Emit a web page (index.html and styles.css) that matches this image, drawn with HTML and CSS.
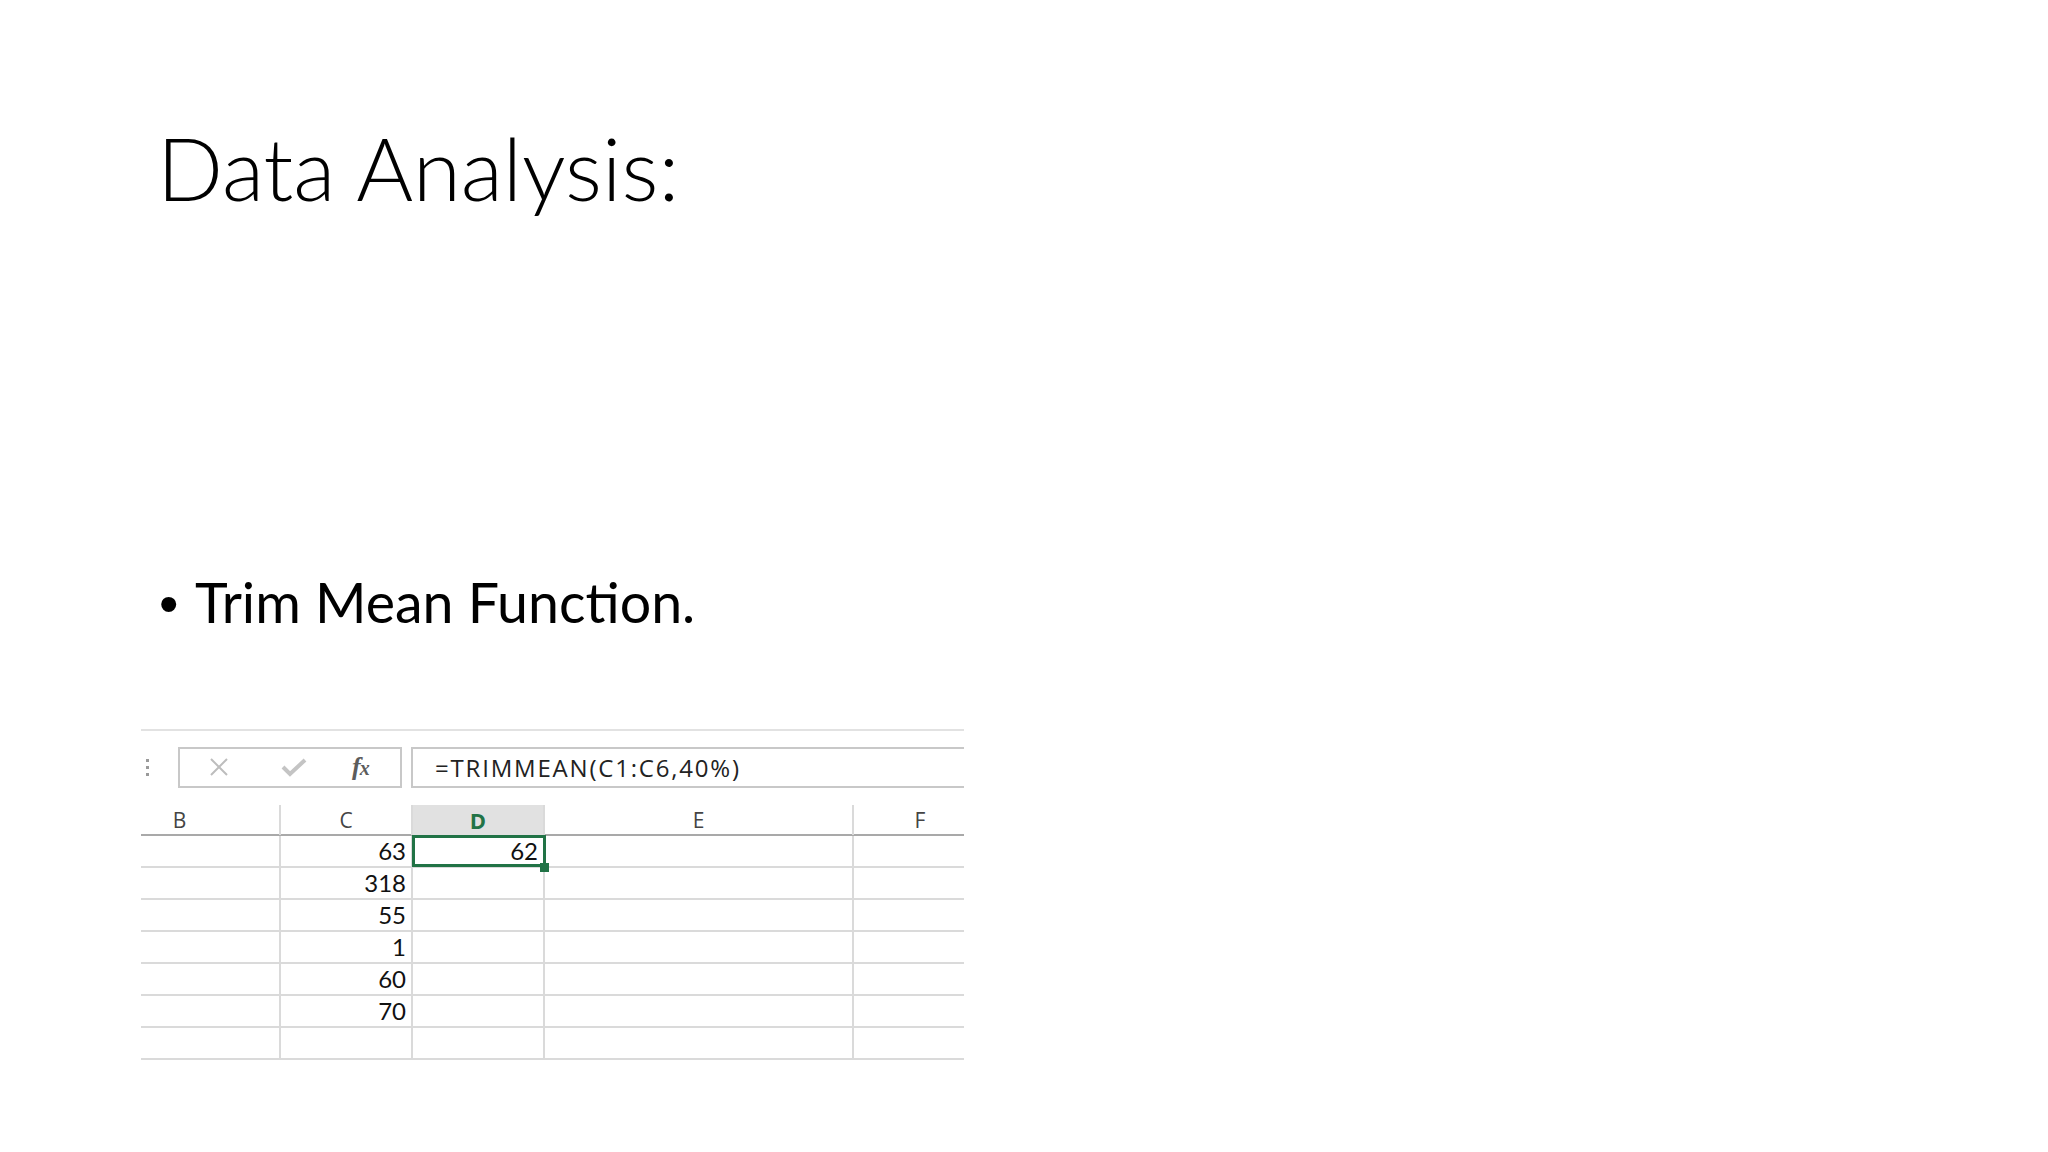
FILE: index.html
```html
<!DOCTYPE html>
<html lang="en">
<head>
    <meta charset="UTF-8">
    <title>Data Analysis</title>
    <link rel="stylesheet" href="styles.css">
</head>
<body>
    <div class="slide">
        <h1 class="title">Data Analysis:</h1>

        <ul class="points">
            <li><span class="bullet">•</span>Trim Mean Function.</li>
        </ul>

        <!-- Excel capture -->
        <div class="sheet">
            <div class="formula-row">
                <div class="grip"><i></i><i></i><i></i></div>
                <div class="fx-box">
                    <svg class="ico-x" width="22" height="22" viewBox="0 0 22 22">
                        <path d="M3 3 L19 19 M19 3 L3 19" stroke="#bdbdbd" stroke-width="2" fill="none"/>
                    </svg>
                    <svg class="ico-ok" width="28" height="22" viewBox="0 0 28 22">
                        <path d="M3 11 L10 18 L25 4" stroke="#c4c4c4" stroke-width="4" fill="none"/>
                    </svg>
                    <span class="fx">f<small>x</small></span>
                </div>
                <div class="formula">=TRIMMEAN(C1:C6,40%)</div>
            </div>

            <div class="grid">
                <div class="grid-inner">
                    <div class="row head">
                        <div class="cell">B</div>
                        <div class="cell">C</div>
                        <div class="cell active">D</div>
                        <div class="cell">E</div>
                        <div class="cell">F</div>
                    </div>
                    <div class="row">
                        <div class="cell"></div>
                        <div class="cell num">63</div>
                        <div class="cell num selected">62<span class="handle"></span></div>
                        <div class="cell"></div>
                        <div class="cell"></div>
                    </div>
                    <div class="row">
                        <div class="cell"></div>
                        <div class="cell num">318</div>
                        <div class="cell"></div>
                        <div class="cell"></div>
                        <div class="cell"></div>
                    </div>
                    <div class="row">
                        <div class="cell"></div>
                        <div class="cell num">55</div>
                        <div class="cell"></div>
                        <div class="cell"></div>
                        <div class="cell"></div>
                    </div>
                    <div class="row">
                        <div class="cell"></div>
                        <div class="cell num">1</div>
                        <div class="cell"></div>
                        <div class="cell"></div>
                        <div class="cell"></div>
                    </div>
                    <div class="row">
                        <div class="cell"></div>
                        <div class="cell num">60</div>
                        <div class="cell"></div>
                        <div class="cell"></div>
                        <div class="cell"></div>
                    </div>
                    <div class="row">
                        <div class="cell"></div>
                        <div class="cell num">70</div>
                        <div class="cell"></div>
                        <div class="cell"></div>
                        <div class="cell"></div>
                    </div>
                    <div class="row">
                        <div class="cell"></div>
                        <div class="cell"></div>
                        <div class="cell"></div>
                        <div class="cell"></div>
                        <div class="cell"></div>
                    </div>
                </div>
            </div>
        </div>
    </div>
</body>
</html>
```

FILE: styles.css
```css
* {
    margin: 0;
    padding: 0;
    box-sizing: border-box;
}

body {
    width: 2048px;
    height: 1152px;
    background: #ffffff;
    color: #000000;
    font-family: Lato, 'Open Sans', sans-serif;
    overflow: hidden;
}

.slide {
    padding-left: 141px;
    padding-top: 124px;
    height: 100%;
}

.title {
    font-family: Lato, sans-serif;
    font-weight: 300;
    font-size: 87px;
    line-height: 1;
    padding-left: 16px;
    color: #000;
}

.points {
    list-style: none;
    margin-top: 363px;
    padding-left: 18px;
}

.points li {
    display: flex;
    align-items: baseline;
    font-size: 55.5px;
    line-height: 1;
}

.bullet {
    font-family: 'Liberation Sans', sans-serif;
    width: 36px;
    flex-shrink: 0;
}

/* Excel screenshot */
.sheet {
    margin-top: 96px;
    width: 823px;
    border-top: 2px solid #e2e2e2;
}

.formula-row {
    display: flex;
    align-items: center;
    margin-top: 16px;
    height: 41px;
}

.grip {
    width: 37px;
    height: 41px;
    display: flex;
    flex-direction: column;
    justify-content: center;
    gap: 4px;
    padding-left: 5px;
}

.grip i {
    display: block;
    width: 3px;
    height: 3px;
    background: #9a9a9a;
}

.fx-box {
    width: 224px;
    height: 41px;
    border: 2px solid #c8c8c8;
    display: flex;
    align-items: center;
    padding-left: 28px;
}

.ico-x {
    margin-right: 50px;
}

.ico-ok {
    margin-right: 44px;
}

.fx {
    font-family: 'Liberation Serif', serif;
    font-style: italic;
    font-weight: 700;
    font-size: 26px;
    color: #5c5c5c;
    letter-spacing: -1px;
}

.fx small {
    font-size: 20px;
}

.formula {
    flex: 1;
    height: 41px;
    margin-left: 9px;
    border: 2px solid #c8c8c8;
    border-right: none;
    padding-left: 22px;
    display: flex;
    align-items: center;
    font-family: 'Open Sans', sans-serif;
    font-size: 24px;
    letter-spacing: 1.8px;
    color: #222;
}

.grid {
    margin-top: 17px;
    overflow: hidden;
}

.grid-inner {
    margin-left: -61px;
}

.row {
    display: grid;
    grid-template-columns: 201px 132px 132px 309px 134px;
    height: 32px;
    border-bottom: 2px solid #dadada;
}

.row.head {
    height: 31px;
    border-bottom: 2px solid #a9a9a9;
}

.cell {
    border-right: 2px solid #dadada;
    display: flex;
    align-items: center;
    justify-content: flex-end;
    padding-right: 5px;
    font-family: Lato, sans-serif;
    font-size: 24px;
    color: #111;
    position: relative;
}

.head .cell {
    justify-content: center;
    padding-right: 0;
    font-family: 'Open Sans', sans-serif;
    font-size: 21px;
    color: #444;
}

.head .cell.active {
    background: #e1e1e1;
    color: #217346;
    font-weight: 700;
    font-size: 22px;
}

.cell.selected {
    outline: 3px solid #217346;
    outline-offset: -2px;
    z-index: 1;
}

.handle {
    position: absolute;
    right: -6px;
    bottom: -6px;
    width: 9px;
    height: 9px;
    background: #217346;
    z-index: 2;
}
```
